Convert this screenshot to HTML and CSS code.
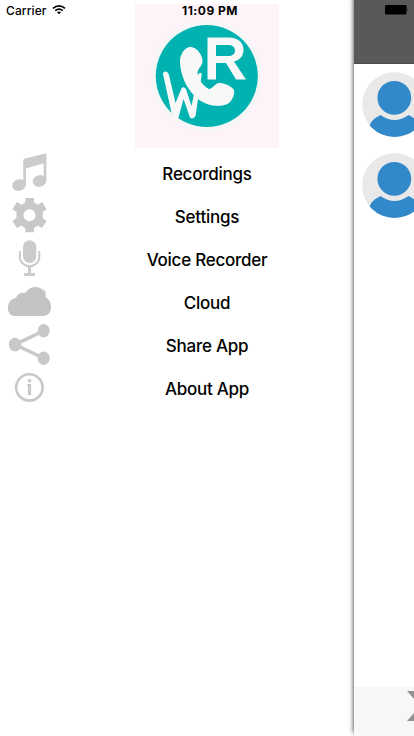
FILE: index.html
```html
<!DOCTYPE html>
<html lang="en">
<head>
<meta charset="utf-8">
<title>Menu</title>
<link rel="stylesheet" href="styles.css">
</head>
<body>
<div class="screen">
  <nav class="drawer">
    <div class="logo">
      <svg width="144" height="144" viewBox="135 4 144 144">
        <circle cx="206.8" cy="76" r="55.5" fill="#f6f6f7"/>
        <circle cx="206.8" cy="76" r="51" fill="#00b3b1"/>
        <path d="M163 74Q163 71 166 71.500Q168.500 72 169 75L175.500 103L181.500 88.500Q183.500 86 186 89L191.500 106L198 75Q200 71 201.800 74L195.500 116Q193 120 190 117.500L183.500 99L178 119.500Q176 122 173 119.500Z" fill="#f8f8f8"/>
        <path d="M191 47C184.500 46.500 179.500 55 180 63C181 78 188 91 198 99C208 107 223 107.500 229 103C232.500 100 235 94 234 90C231 86 226 83.500 220 83C215 82.500 213 89 209 89C203 86 198 79 197.500 73C198 68 202.500 66 202.500 61C202.500 55 197 47.500 191 47Z" fill="#f8f8f8"/>
        <path fill-rule="evenodd" fill="#f8f8f8" d="M207.500 37.500H229C238 37.500 243.500 42.500 243.500 49.500C243.500 56 240 60 234 61.500L246 79.500H236L226 63H216V79.500H207.500ZM216 45V56H228C232.500 56 235 54 235 50.500C235 47 232.500 45 228 45Z"/>
      </svg>
    </div>
    <ul class="menu">
      <li class="item">
        <svg class="icon" viewBox="0 152 60 43" fill="#cbcbcb"><ellipse cx="19" cy="185" rx="6.900" ry="5.800" transform="rotate(-15 19 185)"/><ellipse cx="39.500" cy="181" rx="6.900" ry="5.800" transform="rotate(-15 39.500 181)"/><path d="M23.300 161Q23.300 159 25 158.500L44.500 153.700Q46.400 153.300 46.400 155V181H43.700V163.300L25.900 168.500V185H23.300Z"/></svg>
        <span class="label">Recordings</span>
      </li>
      <li class="item">
        <svg class="icon" viewBox="0 195 60 43" fill="#cac7c7"><path fill-rule="evenodd" d="M25.300 198H34V202.500L38 204.800L42 202L46.600 209.300L42.700 212V218L46.600 221L42 228L38 225.600L34 228V232.300H25.300V228L21.300 225.600L17 228L12.400 221L16.500 218V212L12.400 209.300L17 202L21.300 204.800L25.300 202.500ZM29.500 209.200A6 6 0 1 0 29.500 221.200A6 6 0 1 0 29.500 209.200Z"/></svg>
        <span class="label">Settings</span>
      </li>
      <li class="item">
        <svg class="icon" viewBox="0 238 60 43" fill="#cbcbcb"><rect x="23" y="240.300" width="13.300" height="22.700" rx="6.600"/><path d="M19.900 251V257A9.700 9.300 0 0 0 39.300 257V251" fill="none" stroke="#cbcbcb" stroke-width="2"/><path d="M28 266H31V273H35V276H24V273H28Z"/></svg>
        <span class="label">Voice Recorder</span>
      </li>
      <li class="item">
        <svg class="icon" viewBox="0 281 60 43" fill="#c4c4c4"><path d="M15 316C10.500 316 8 312.500 8 308C8 302 11 298.500 16 298C17 294 21 292 25 293C28 289 31 287 35 287C39 287 41 288 42.500 290C45 291 46 294 45.800 297.500C49 299 51 302 51 307C51 312.500 48 316 43.500 316Z"/><path d="M42 289L45 290.500L45.500 293.500" fill="none" stroke="#d6d6d6" stroke-width="1"/></svg>
        <span class="label">Cloud</span>
      </li>
      <li class="item">
        <svg class="icon" viewBox="0 324 60 43" fill="#cac7c7"><path d="M43.700 330.700L15 344.600L43.700 358.300" fill="none" stroke="#cac7c7" stroke-width="3.400"/><ellipse cx="15" cy="344.600" rx="6.200" ry="6.800"/><ellipse cx="43.700" cy="330.700" rx="6" ry="6.700"/><ellipse cx="43.700" cy="358.300" rx="6" ry="6.700"/></svg>
        <span class="label">Share App</span>
      </li>
      <li class="item">
        <svg class="icon" viewBox="0 367 60 43" fill="#cac7c7"><circle cx="29.400" cy="387.400" r="13.200" fill="none" stroke="#cac7c7" stroke-width="2.600"/><rect x="27.900" y="379.300" width="3.200" height="3"/><path d="M27.300 384H31.100V395H27.900V386H27.300Z"/></svg>
        <span class="label">About App</span>
      </li>
    </ul>
  </nav>
  <main class="page">
    <header class="navbar"></header>
    <section class="people">
      <svg class="avatar" viewBox="0 0 66 66"><use href="#person"/></svg>
      <svg class="avatar" viewBox="0 0 66 66">
        <defs>
          <clipPath id="round"><circle cx="32.500" cy="32.500" r="32.500"/></clipPath>
          <g id="person" clip-path="url(#round)">
            <circle cx="32.500" cy="32.500" r="32.500" fill="#e9e9e9"/>
            <circle cx="32.300" cy="25.800" r="16.900" fill="#3289c9"/>
            <path d="M7 54L10 49Q14 45 18.500 43Q32.500 53 46.500 43Q51 45 55 49L58 54V66H7Z" fill="#3289c9"/>
          </g>
        </defs>
        <use href="#person"/>
      </svg>
    </section>
    <footer class="toolbar">
      <svg class="glass" width="30" height="30" viewBox="0 0 30 30"><path d="M-1 0H30L16 15L30 30H-1L12 15Z" fill="#929292"/></svg>
    </footer>
  </main>
  <div class="status">
    <span class="carrier">Carrier</span>
    <svg class="wifi" width="14" height="11" viewBox="0 0 14 11" fill="none" stroke="#000" stroke-width="1.700"><path d="M1 4.300Q7-.7 13 4.300M3.200 6.600Q7 3.500 10.800 6.600"/><path d="M5 8.300Q7 6.700 9 8.300L7 10.300Z" fill="#000" stroke="none"/></svg>
    <span class="clock">11:09 PM</span>
    <svg class="battery" width="24" height="10" viewBox="0 0 24 10"><rect width="21.500" height="9.500" rx="1"/><path d="M22.300 3.500Q23.600 5 22.300 6.500Z"/></svg>
  </div>
</div>
</body>
</html>
```
FILE: styles.css
```css
* { box-sizing: border-box; }
body { margin: 0; background: #fff; color: #000; font-family: Inter, "Liberation Sans", sans-serif; }
.screen { position: relative; display: flex; width: 414px; height: 736px; overflow: hidden; }
.drawer { flex: 0 0 354px; padding-top: 4px; }
.logo { width: 144px; height: 144px; margin-left: 135px; background: #fff3fa; }
.logo svg { display: block; }
.menu { list-style: none; margin: 4px 0 0; padding: 0; }
.item { display: grid; grid-template-columns: 60px 294px; align-items: center; height: 43px; }
.icon { display: block; width: 60px; height: 43px; }
.label { height: 43px; padding-top: 1px; text-align: center; font-size: 17px; font-weight: 500; line-height: 43px; letter-spacing: -.25px; }
.page { display: flex; flex-direction: column; flex: 0 0 414px; height: 736px; background: #fff; box-shadow: 0 -3px 5px rgba(0, 0, 0, .85); }
.navbar { height: 64px; background: #595959; border-bottom: 1px solid #4b4b4b; }
.people { display: flex; flex-direction: column; gap: 15px; flex: 1; padding: 8px; }
.avatar { display: block; width: 66px; height: 66px; }
.toolbar { height: 49px; padding: 4px 0 0 54px; background: #f7f7f7; }
.glass { display: block; overflow: visible; }
.status { position: absolute; top: 0; left: 0; display: flex; align-items: center; width: 414px; height: 20px; padding-left: 6px; font-size: 12px; }
.carrier { width: 47px; font-weight: 500; letter-spacing: .1px; }
.wifi { margin: -1px 0 0 -1px; }
.clock { width: 74px; margin-left: 107px; text-align: center; font-weight: 700; letter-spacing: .5px; white-space: nowrap; }
.battery { margin-left: 138px; }
```
